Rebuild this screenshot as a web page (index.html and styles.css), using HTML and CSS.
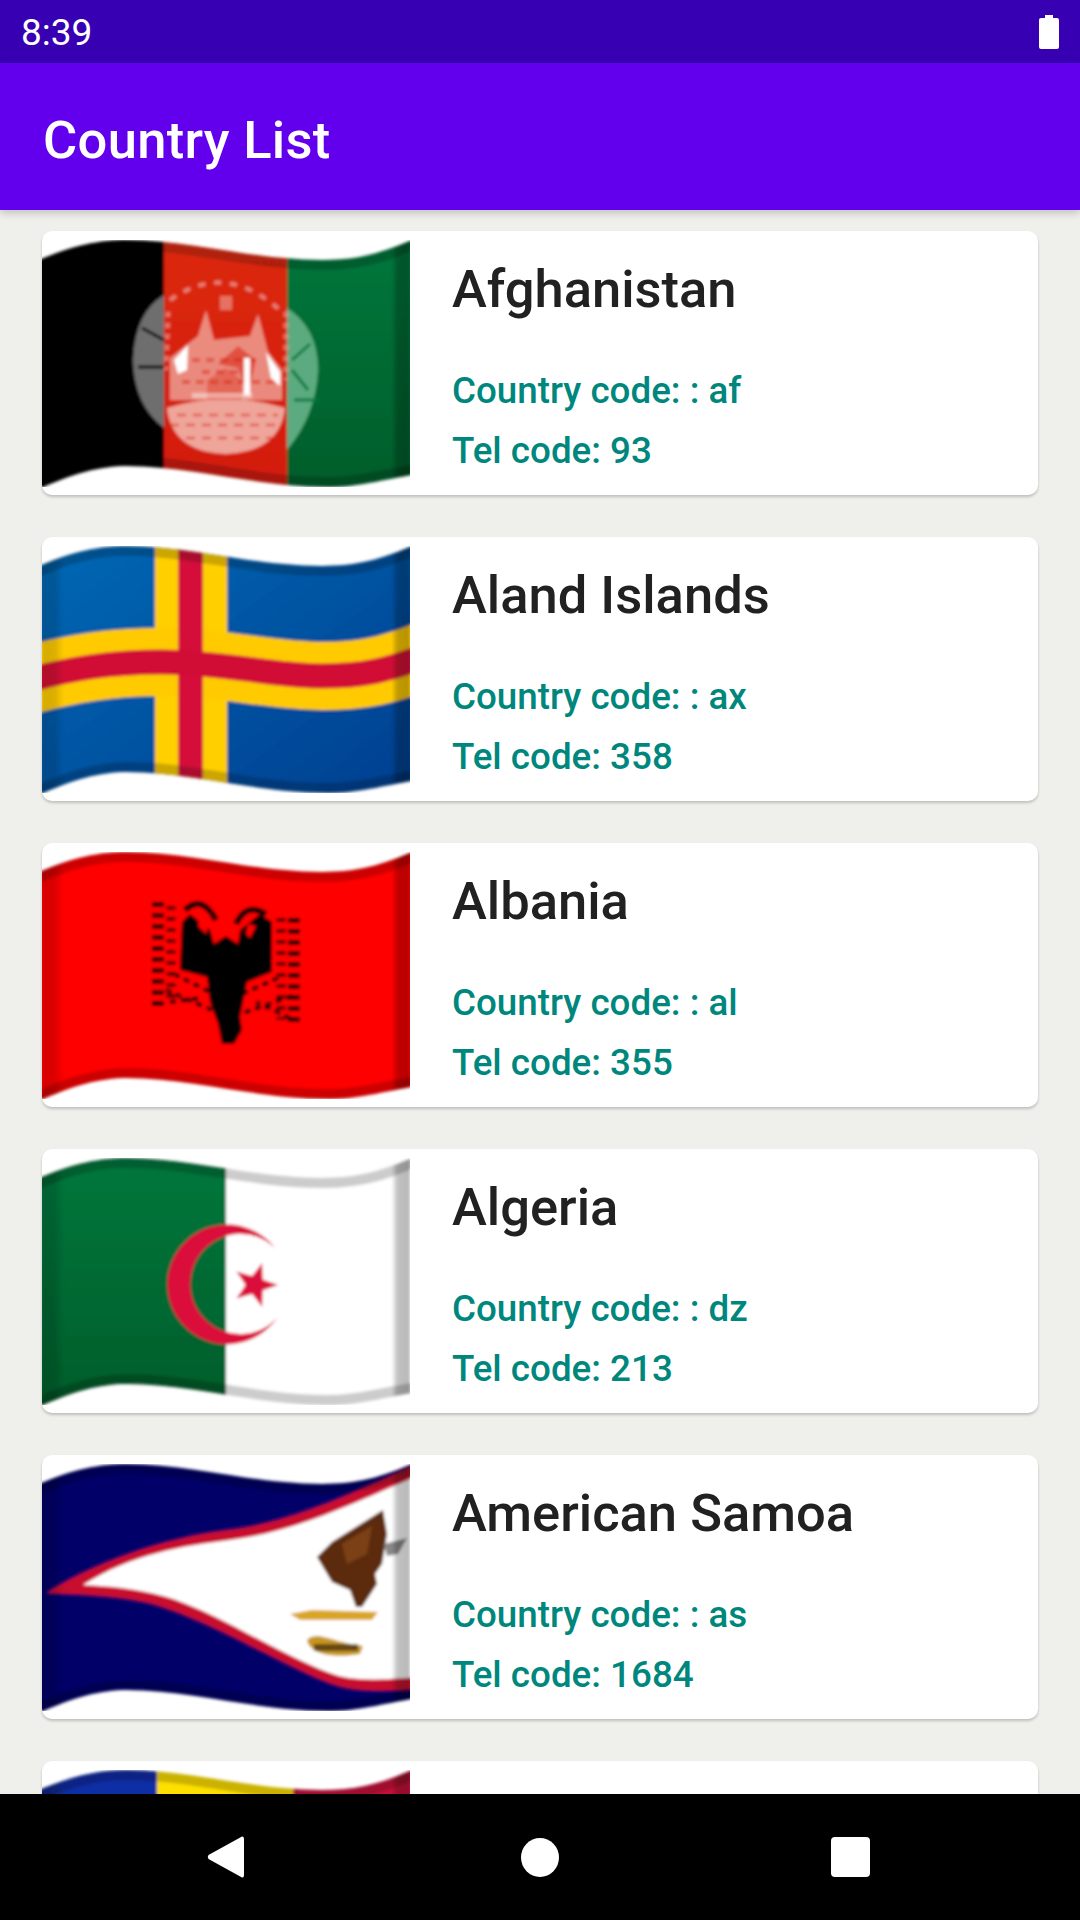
FILE: index.html
```html
<!DOCTYPE html>
<html lang="en">
<head>
<meta charset="utf-8">
<title>Country List</title>
<link rel="stylesheet" href="styles.css">
</head>
<body>
<svg class="defs" width="0" height="0" aria-hidden="true">
  <defs>
    <clipPath id="wave"><path d="M-20 28C25 6 55 0 85 0C150 0 210 20 280 20C320 20 345 12 388 -8V232C345 238 320 247 285 247C215 247 150 226 85 226C55 226 25 235 -20 257Z"/></clipPath>
    <filter id="soft" filterUnits="userSpaceOnUse" x="-30" y="-30" width="428" height="307"><feGaussianBlur stdDeviation="1.8"/></filter>
    <linearGradient id="shadeH" x1="0" y1="0" x2="1" y2="0"><stop offset="0" stop-color="#000" stop-opacity=".16"/><stop offset=".035" stop-color="#000" stop-opacity=".14"/><stop offset=".06" stop-color="#000" stop-opacity="0"/><stop offset=".95" stop-color="#000" stop-opacity="0"/><stop offset=".965" stop-color="#000" stop-opacity=".24"/><stop offset="1" stop-color="#000" stop-opacity=".28"/></linearGradient>
    <linearGradient id="blueG" x1="0" y1="0" x2="1" y2="1"><stop offset="0" stop-color="#006db8"/><stop offset="1" stop-color="#003a8c"/></linearGradient>
    <linearGradient id="greenG" x1="0" y1="0" x2="0" y2="1"><stop offset="0" stop-color="#007a3e"/><stop offset="1" stop-color="#005a28"/></linearGradient>
    <linearGradient id="redG" x1="0" y1="0" x2="0" y2="1"><stop offset="0" stop-color="#dc2a12"/><stop offset="1" stop-color="#d21a0c"/></linearGradient>
    <g id="edge">
      <rect x="0" y="-20" width="368" height="287" fill="url(#shadeH)"/>
      <path d="M-20 28C25 6 55 0 85 0C150 0 210 20 280 20C320 20 345 12 388 -8M-20 257C25 235 55 226 85 226C150 226 215 247 285 247C320 247 345 238 388 232" fill="none" stroke="#000" stroke-opacity=".2" stroke-width="20"/>
    </g>
  </defs>
</svg>
<div class="screen">
  <div class="status">
    <span class="time">8:39</span>
    <svg class="battery" viewBox="0 0 20 34"><path d="M6 0H14V3H18Q20 3 20 5V32Q20 34 18 34H2Q0 34 0 32V5Q0 3 2 3H6Z" fill="#fff"/></svg>
  </div>
  <header class="appbar">Country List</header>
  <main class="list">

    <article class="card">
      <svg class="flag" viewBox="0 0 368 247">
        <g filter="url(#soft)"><g clip-path="url(#wave)">
          <rect x="-30" y="-30" width="152" height="307" fill="#000"/>
          <rect x="122" y="-30" width="123" height="307" fill="url(#redG)"/>
          <rect x="245" y="-30" width="153" height="307" fill="url(#greenG)"/>
          <path d="M122 55Q93 72 91 120Q92 165 122 188Z" fill="#6e6e6e"/>
          <path d="M100 88L122 100M96 127H122" stroke="#000" stroke-width="3"/>
          <path d="M245 68Q276 88 276 130Q274 175 245 210Z" fill="#5cab80"/>
          <path d="M250 120L268 104M252 160H276M250 130L266 150" stroke="#007a3e" stroke-width="3"/>
          <path d="M128 60Q184 20 240 72" fill="none" stroke="#f1a49a" stroke-width="4" stroke-dasharray="7 9" opacity=".7"/>
          <path d="M126 72L124 130M244 72L244 140" stroke="#f1a49a" stroke-width="5" stroke-dasharray="5 6" opacity=".6"/>
          <g fill="#efa59a">
            <path d="M125 168Q184 150 243 168Q238 212 184 214Q130 212 125 168Z"/>
            <path d="M128 118L156 96L164 70L172 100L208 96L216 74L226 112L240 130V160H128Z" opacity=".8"/>
            <rect x="178" y="56" width="12" height="14" opacity=".6"/>
          </g>
          <path d="M128 185H243M128 198H243M135 175H236" stroke="#d9230f" stroke-width="2.5" stroke-dasharray="9 7" opacity=".55"/>
          <path d="M150 120H220M140 142H235M160 132H210" stroke="#d9230f" stroke-width="4" stroke-dasharray="8 6" opacity=".5"/>
          <path d="M165 140L184 128L200 140V160H165Z" fill="#d9230f" opacity=".35"/>
          <path d="M176 124L196 106L214 120L206 156L196 128Z" fill="#d9230f" opacity=".55"/>
          <g fill="#fff">
            <path d="M132 120L146 105L145 130L136 134Z"/>
            <path d="M224 112L238 132V146L229 138Z"/>
            <rect x="202" y="118" width="6" height="37"/>
            <rect x="150" y="153" width="60" height="5" opacity=".45"/>
          </g>
          <use href="#edge"/>
        </g></g>
      </svg>
      <div class="info"><h2 class="name">Afghanistan</h2><p class="meta first">Country code: : af</p><p class="meta">Tel code: 93</p></div>
    </article>

    <article class="card">
      <svg class="flag" viewBox="0 0 368 247">
        <g filter="url(#soft)"><g clip-path="url(#wave)">
          <rect x="-30" y="-30" width="428" height="307" fill="url(#blueG)"/>
          <rect x="113" y="-30" width="72" height="307" fill="#ffcf00"/>
          <path d="M-20 136C30 122 70 116 120 116C180 116 230 130 280 130C320 130 345 125 388 108" fill="none" stroke="#ffcb00" stroke-width="68"/>
          <rect x="136" y="-30" width="25" height="307" fill="#d4103a"/>
          <path d="M-20 136C30 122 70 116 120 116C180 116 230 130 280 130C320 130 345 125 388 108" fill="none" stroke="#d20f34" stroke-width="25"/>
          <use href="#edge"/>
        </g></g>
      </svg>
      <div class="info"><h2 class="name">Aland Islands</h2><p class="meta first">Country code: : ax</p><p class="meta">Tel code: 358</p></div>
    </article>

    <article class="card">
      <svg class="flag" viewBox="0 0 368 247">
        <g filter="url(#soft)"><g clip-path="url(#wave)">
          <rect x="-30" y="-30" width="428" height="307" fill="#ff0000"/>
          <path d="M116 50V158" stroke="#000" stroke-width="12" stroke-dasharray="5 6" fill="none"/>
          <path d="M129 54V150" stroke="#000" stroke-width="9" stroke-dasharray="4 7" opacity=".7" fill="none"/>
          <path d="M252 66V172" stroke="#000" stroke-width="12" stroke-dasharray="5 6" fill="none"/>
          <path d="M239 66V168" stroke="#000" stroke-width="9" stroke-dasharray="4 7" opacity=".7" fill="none"/>
          <path d="M132 122L168 140M124 138L170 158M128 150L160 146" stroke="#000" stroke-width="4" stroke-dasharray="6 5" fill="none"/>
          <path d="M236 126L200 142M250 144L198 162M248 166L214 150" stroke="#000" stroke-width="4" stroke-dasharray="6 5" fill="none"/>
          <path d="M140 70L148 62L168 78L172 92L184 84L196 92L198 78L218 62L230 70V120L205 130L198 165L200 178L192 192H180L176 172L168 150L165 125L138 118Z" fill="#000"/>
          <path d="M143 58Q160 42 174 68M194 72Q204 50 224 62" fill="none" stroke="#000" stroke-width="6"/>
          <path d="M158 64L166 74L164 82L156 74ZM206 72L214 74L208 86L204 82Z" fill="#ff0000"/>
          <use href="#edge"/>
        </g></g>
      </svg>
      <div class="info"><h2 class="name">Albania</h2><p class="meta first">Country code: : al</p><p class="meta">Tel code: 355</p></div>
    </article>

    <article class="card">
      <svg class="flag" viewBox="0 0 368 247">
        <g filter="url(#soft)"><g clip-path="url(#wave)">
          <rect x="-30" y="-30" width="428" height="307" fill="#fff"/>
          <rect x="-30" y="-30" width="214" height="307" fill="url(#greenG)"/>
          <path d="M233 90A60 60 0 1 0 235 160A50 50 0 1 1 233 90Z" fill="#db0f3b"/>
          <path d="M236 127L220.700 132.600L220.100 148.900L210.100 136L194.400 140.500L203.500 127L194.400 113.500L210.100 118L220.100 105.100L220.700 121.400Z" fill="#db0f3b"/>
          <use href="#edge"/>
        </g></g>
      </svg>
      <div class="info"><h2 class="name">Algeria</h2><p class="meta first">Country code: : dz</p><p class="meta">Tel code: 213</p></div>
    </article>

    <article class="card">
      <svg class="flag" viewBox="0 0 368 247">
        <g filter="url(#soft)"><g clip-path="url(#wave)">
          <rect x="-30" y="-30" width="428" height="307" fill="#000068"/>
          <path d="M5 129C50 100 120 74 188 66C250 58 310 30 388 -6V224C340 228 310 228 285 218C240 200 170 158 115 141C85 132 40 130 5 129Z" fill="#c8102e"/>
          <path d="M41 121C90 90 140 82 188 76C250 68 300 45 388 6V212C340 216 310 218 288 209C240 192 170 145 121 132C95 125 70 122 41 121Z" fill="#fff"/>
          <path d="M341 46L345 70L340 100L333 110L335 120L320 143H314L308 126L290 118L275 93L290 78Z" fill="#5c2c0c"/>
          <path d="M300 80L330 62L325 90L305 100Z" fill="#8a4a1c" opacity=".7"/>
          <path d="M342 80L365 74L356 90L345 92Z" fill="#888"/>
          <path d="M248 150L270 146L336 148L330 156H258Z" fill="#d9a520"/>
          <path d="M265 176C275 166 288 178 321 182L318 190C295 194 268 192 265 176Z" fill="#c8961e"/>
          <path d="M272 180H316V187H272Z" fill="#3a2a10" opacity=".7"/>
          <use href="#edge"/>
        </g></g>
      </svg>
      <div class="info"><h2 class="name">American Samoa</h2><p class="meta first">Country code: : as</p><p class="meta">Tel code: 1684</p></div>
    </article>

    <article class="card">
      <svg class="flag" viewBox="0 0 368 247">
        <g filter="url(#soft)"><g clip-path="url(#wave)">
          <rect x="-30" y="-30" width="145" height="307" fill="#0a2ea4"/>
          <rect x="115" y="-30" width="136" height="307" fill="#fedf00"/>
          <rect x="251" y="-30" width="147" height="307" fill="#c8103a"/>
          <use href="#edge"/>
        </g></g>
      </svg>
    </article>

  </main>
  <nav class="navbar">
    <svg class="nav-back" viewBox="0 0 42 42"><path d="M35 .5Q37 0 37 3V39Q37 42 35 41.500L1.500 23Q0 21 1.500 19Z" fill="#fff"/></svg>
    <span class="nav-home"></span>
    <span class="nav-recent"></span>
  </nav>
</div>
</body>
</html>
```

FILE: styles.css
```css
* { box-sizing: border-box; }
html, body { margin: 0; padding: 0; }
body { font-family: Roboto, "Noto Sans", sans-serif; background: #eff0eb; }
.defs { position: absolute; }
.screen { width: 1080px; height: 1920px; display: flex; flex-direction: column; overflow: hidden; background: #eff0eb; }
.status { height: 63px; flex: none; background: #3700b3; color: #fff; display: flex; align-items: center; justify-content: space-between; padding: 0 21px; }
.time { font-size: 37px; line-height: 66px; height: 63px; }
.battery { width: 20px; height: 34px; }
.appbar { height: 147px; flex: none; background: #6200ee; color: #fff; font-size: 52.5px; letter-spacing: .3px; font-weight: 500; padding: 6px 0 0 43px; display: flex; align-items: center; box-shadow: 0 3px 8px rgba(0,0,0,.2); position: relative; z-index: 1; }
.list { flex: 1; min-height: 0; overflow: hidden; padding: 21px 42px 0; display: flex; flex-direction: column; gap: 42px; }
.card { flex: none; height: 264px; background: #fff; border-radius: 10px; box-shadow: 0 2px 3px rgba(0,0,0,.2); display: flex; padding-top: 9px; gap: 42px; overflow: hidden; }
.flag { width: 368px; height: 247px; flex: none; display: block; }
.info { display: flex; flex-direction: column; }
.name { margin: 0; font-size: 52.5px; font-weight: 500; line-height: 62px; color: #212121; padding-top: 18px; }
.meta { margin: 0; font-size: 36.75px; font-weight: 500; line-height: 60px; color: #00877d; }
.meta.first { margin-top: 41px; }
.navbar { height: 126px; flex: none; background: #000; display: flex; align-items: center; gap: 272px; padding-left: 207px; position: relative; }
.nav-back { width: 42px; height: 42px; }
.nav-home { width: 38px; height: 39px; border-radius: 50%; background: #fff; }
.nav-recent { width: 39px; height: 40px; border-radius: 4px; background: #fff; }
```
